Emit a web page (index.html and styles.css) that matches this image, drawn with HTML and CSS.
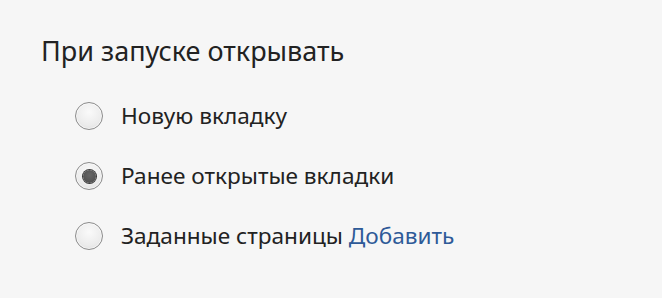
FILE: index.html
```html
<!DOCTYPE html>
<html lang="ru">
<head>
<meta charset="utf-8">
<link rel="stylesheet" href="styles.css">
</head>
<body>
<section class="panel">
  <h1 class="title">При запуске открывать</h1>
  <div class="options">
    <label class="option"><span class="radio"></span><span class="label">Новую вкладку</span></label>
    <label class="option"><span class="radio checked"></span><span class="label">Ранее открытые вкладки</span></label>
    <label class="option"><span class="radio"></span><span class="label">Заданные страницы <a class="link">Добавить</a></span></label>
  </div>
</section>
</body>
</html>
```
FILE: styles.css
```css
html, body {
  margin: 0;
  background: #f6f6f6;
}
body {
  font-family: "Noto Sans", "Open Sans", sans-serif;
  color: #222;
  width: 662px;
  height: 298px;
  overflow: hidden;
}
.panel {
  padding: 32px 0 0 41px;
}
.title {
  margin: 0;
  font-size: 27px;
  font-weight: 400;
  line-height: 38px;
}
.options {
  display: flex;
  flex-direction: column;
  gap: 30px;
  padding: 31px 0 0 34px;
}
.option {
  display: flex;
  align-items: center;
  gap: 18px;
  height: 30px;
}
.radio {
  box-sizing: border-box;
  width: 28px;
  height: 28px;
  border-radius: 50%;
  border: 1.5px solid #8c8c8c;
  background: radial-gradient(circle at 50% 35%, #fafafa 0%, #ececec 60%, #dcdcdc 100%);
  box-shadow: inset 0 0 0 1px rgba(255,255,255,0.6);
  display: flex;
  align-items: center;
  justify-content: center;
}
.radio.checked::after {
  content: "";
  width: 13px;
  height: 13px;
  border-radius: 50%;
  background: radial-gradient(circle at 50% 40%, #666 0%, #4a4a4a 100%);
  box-shadow: 0 0 0 1px #3a3a3a;
}
.label {
  font-size: 22.6px;
  line-height: 30px;
}
.link {
  color: #2e5a98;
}
```
